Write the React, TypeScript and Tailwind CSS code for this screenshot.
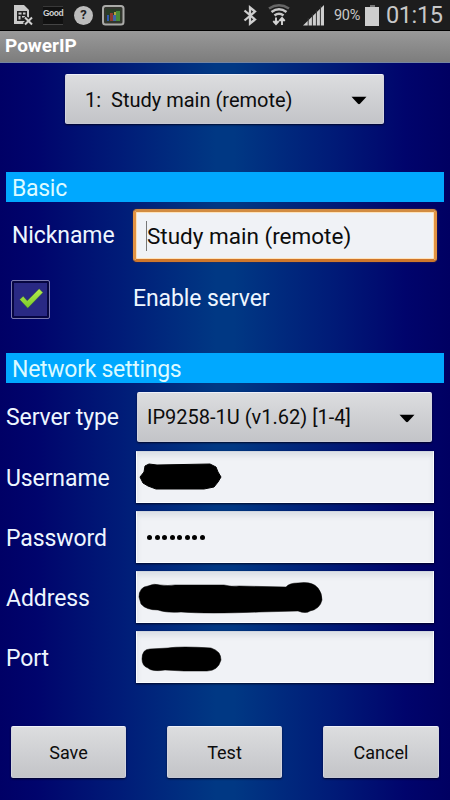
import type { ReactNode } from "react";

const face =
  "bg-linear-to-b from-[#dcdddf] to-[#c3c4c8] text-[#0c0c0c] border border-t-[#eef0fa] border-x-[#d3d5df] border-b-[#c6c8d4] rounded-[2px] shadow-[0_1px_2px_rgba(0,0,20,0.8)]";

function Caret({ className }: { className: string }) {
  return (
    <svg className={className} width="16" height="9" viewBox="0 0 16 9">
      <path d="M.5 .8H15.500L9 7.800Q8 8.500 7 7.800Z" fill="#000" />
    </svg>
  );
}

function Section({ children }: { children: ReactNode }) {
  return (
    <h2 className="mx-[6px] h-[30px] bg-[#00a8ff] pl-[6px] text-[23px] leading-[33px] font-normal tracking-[-0.28px] text-[#dcfaff]">
      {children}
    </h2>
  );
}

function Row({ label, children }: { label: string; children?: ReactNode }) {
  return (
    <div className="mb-[8px] flex h-[52px] items-center">
      <label className="w-[136px] pt-[3px] pl-[6px] text-[23px] leading-[30px] tracking-[-0.1px] text-[#eef6ff]">{label}</label>
      <div className="flex h-[52px] w-[298px] items-center border border-t-[#cfd5df] border-[#fafcff] bg-[#f0f2f6] shadow-[inset_0_4px_5px_rgba(120,130,150,0.16),0_1px_2px_rgba(0,0,20,0.8)]">
        {children}
      </div>
    </div>
  );
}

function StatusBar() {
  return (
    <header className="flex h-[31px] shrink-0 items-center border-b border-black bg-[#1d1d1d] text-[#c8c8c8]">
      <svg className="ml-[13px] shrink-0" width="21" height="22" viewBox="0 0 21 22">
        <path d="M1 1H11L16 6V20H1Z" fill="#c9c9c9" />
        <path d="M4 7h10v10H4z" fill="#222" />
        <path d="M5.5 8.5h3v2h-3zM10 8.5h2.5v2H10zM5.5 12h2v3.5h-2zM9 12h3.5v1.5H9z" fill="#c9c9c9" />
        <path d="M11.5 13 19 20.5M19 13l-7.500 7.500" stroke="#1d1d1d" strokeWidth="4.500" />
        <path d="M12 13.500 19 20.500M19 13.500l-7 7" stroke="#d0d0d0" strokeWidth="2" />
      </svg>
      <div className="ml-[9px] flex h-[19px] w-[20px] shrink-0 items-start justify-center border-t border-b border-t-[#393939] border-b-[#444] bg-[#111] pt-px font-['Liberation_Sans'] text-[8.500px] leading-[10px] font-bold tracking-[-0.500px] text-[#d0d0d0]">
        Good
      </div>
      <div className="ml-[11px] flex size-[19px] shrink-0 items-center justify-center rounded-full bg-[#bcbcbc] text-[13px] font-bold text-[#222]">
        ?
      </div>
      <svg className="ml-[9px] shrink-0" width="23" height="21" viewBox="0 0 23 21">
        <rect x="1" y="1" width="20.500" height="18.500" rx="2.500" fill="#34362f" stroke="#aaaaa8" strokeWidth="2" />
        <rect x="4" y="4" width="14.500" height="12.500" fill="#293d28" />
        <path d="M5 10h2v6H5z" fill="#3158ae" />
        <path d="M8 8h3v8H8z" fill="#8f3b30" />
        <path d="M11 10h3v6h-3z" fill="#4265a8" />
        <path d="M14 6h4v10h-4z" fill="#4a8a38" />
        <path d="M12 7h2v3h-2z" fill="#b2a240" />
      </svg>
      <svg className="ml-[118px] shrink-0" width="14" height="21" viewBox="0 0 14 21">
        <path d="M1.500 5.500 12 14.500 7 18.500V2.500l5 4L1.500 15.500" fill="none" stroke="#cecece" strokeWidth="2.300" />
      </svg>
      <svg className="ml-[10px] shrink-0" width="24" height="24" viewBox="0 0 24 24">
        <g fill="none" strokeWidth="2.600">
          <path d="M2 5.500Q12-1 22 5.500" stroke="#666" />
          <path d="M4.500 9Q12 3.500 19.500 9" stroke="#c8c8c8" />
          <path d="M7.500 12.500Q12 9 16.500 12.500" stroke="#c8c8c8" />
        </g>
        <path d="M9 14.500v7M6.300 18l2.700 3 2.700-3M15 22v-7M12.300 18l2.700-3 2.700 3" fill="none" stroke="#d4d4d4" strokeWidth="1.900" />
      </svg>
      <svg className="ml-[12px] shrink-0" width="22" height="22" viewBox="0 0 22 22">
        <path d="M0 21.500 21 1V21.500Z" fill="#cecece" />
        <path d="M5.200 14v8M9.400 10v12M13.400 6v16M17.400 2v20" stroke="#333" strokeWidth="1" />
      </svg>
      <span className="ml-[9px] w-[27px] shrink-0 pt-[2px] text-[14.500px] tracking-[-0.300px] whitespace-nowrap">90%</span>
      <svg className="ml-[4px] shrink-0" width="14" height="21" viewBox="0 0 14 21">
        <path d="M5 0h5v2H5z" fill="#777" />
        <path d="M0 2h14v19H0z" fill="#cecece" />
      </svg>
      <time className="ml-[7px] text-[23.500px] leading-[31px] tracking-[-0.400px]">01:15</time>
    </header>
  );
}

export default function App() {
  return (
    <div className="flex h-[800px] w-[450px] flex-col overflow-hidden bg-[linear-gradient(90deg,#000066_0%,#00046c_8%,#001c78_27%,#003884_48%,#003884_52%,#001c78_73%,#00046c_90%,#000062_100%)] font-[Roboto,sans-serif]">
      <StatusBar />
      <h1 className="h-[32px] shrink-0 border-b border-[#7585a0] bg-linear-to-b from-[#999] to-[#7d7d7d] pl-[5px] text-[19px] leading-[30px] font-bold text-white">
        PowerIP
      </h1>

      <main className="flex flex-col pt-[11px]">
        <button className={`ml-[65px] flex h-[50px] w-[319px] items-center pl-[19px] text-[20px] ${face}`}>
          <span className="w-[266px] pt-px text-left whitespace-pre">{"1:  Study main (remote)"}</span>
          <Caret className="mt-[2px]" />
        </button>

        <div className="mt-[48px]">
          <Section>Basic</Section>
        </div>
        <div className="mt-[7px] flex h-[53px] items-center">
          <label className="w-[133px] pt-[2px] pl-[12px] text-[23px] tracking-[-0.1px] text-[#eef6ff]">Nickname</label>
          <div className="flex h-[53px] w-[304px] items-center rounded-[4px] border-[3px] border-t-[#d28c42] border-x-[#e29343] border-b-[#cf772c] bg-[#f0f2f6] pl-[10px] text-[22.500px] text-[#0c0c0c] shadow-[inset_0_0_0_1px_#ffe2b8,0_0_2px_#472f3d]">
            <span className="h-[30px] w-px bg-[#777]" />
            <span className="pt-[2px]">Study main (remote)</span>
          </div>
        </div>
        <div className="mt-[18px] flex h-[38px] items-center">
          <div className="ml-[11px] flex size-[39px] items-center justify-center rounded-[2px] border-[1.500px] border-[#7878ae] bg-[#292984] shadow-[inset_0_0_0_2px_#060642]">
            <svg width="26" height="22" viewBox="0 0 24 20">
              <defs>
                <linearGradient id="check" x2="0" y2="1">
                  <stop stopColor="#b7ed4e" />
                  <stop offset="1" stopColor="#78c92a" />
                </linearGradient>
              </defs>
              <path d="M1.500 10.500 4.800 7.500 8.500 11.500 19.500 .5 23 4 9 18.500Z" fill="url(#check)" stroke="#294b43" strokeWidth=".4" />
            </svg>
          </div>
          <span className="ml-[83px] text-[23px] tracking-[-0.100px] text-[#eef6ff]">Enable server</span>
        </div>

        <div className="mt-[35px]">
          <Section>Network settings</Section>
        </div>
        <div className="mt-[9px] mb-[9px] flex h-[50px] items-center">
          <label className="w-[137px] pt-[2px] pl-[6px] text-[23px] tracking-[-0.100px] text-[#eef6ff]">Server type</label>
          <button className={`flex h-[50px] w-[295px] items-center pl-[9px] text-[20px] ${face}`}>
            <span className="w-[252px] text-left">IP9258-1U (v1.62) [1-4]</span>
            <Caret className="mt-[3px]" />
          </button>
        </div>
        <Row label="Username">
          <svg className="ml-[2px] blur-[0.5px]" width="84" height="30" viewBox="0 0 84 30">
            <path d="M1 15 5 10 6 4 10 2 18 3 71 2 77 5 79 10 82 15 79 20 75 25 65 27 17 27 9 24 4 21Z" strokeLinejoin="round" stroke="#000" />
          </svg>
        </Row>
        <Row label="Password">
          <span className="ml-[10px] flex gap-[2.500px]">
            {Array.from({ length: 8 }, (_, i) => (
              <i key={i} className="size-[5px] rounded-full bg-black" />
            ))}
          </span>
        </Row>
        <Row label="Address">
          <svg className="mt-[2px] ml-[1px] blur-[0.5px]" width="186" height="34" viewBox="0 0 186 34">
            <path d="M1 16Q1 6 10 5Q16 2 22 4Q30 5 37 4L86 4Q94 6 101 5L148 6Q151 2 160 2Q174 0 180 7Q184 12 184 19Q182 28 172 30Q168 33 160 30L121 31Q70 33 43 31Q28 32 20 29Q8 29 3 23Z" stroke="#000" strokeWidth=".5" />
          </svg>
        </Row>
        <Row label="Port">
          <svg className="mt-[4px] ml-[4px] blur-[0.5px]" width="82" height="28" viewBox="0 0 82 28">
            <path d="M1 14Q1 4 9 4L27 3Q40 1 70 3Q80 6 80 15Q77 26 66 26L43 26 24 25Q11 27 7 23Q1 21 1 14Z" stroke="#000" strokeWidth=".5" />
          </svg>
        </Row>
        <div className="mt-[35px] ml-[11px] flex gap-[41px] text-[18px]">
          <button className={`h-[52px] w-[115px] pt-px ${face}`}>Save</button>
          <button className={`h-[52px] w-[115px] pt-px ${face}`}>Test</button>
          <button className={`h-[52px] w-[116px] pt-px ${face}`}>Cancel</button>
        </div>
      </main>
    </div>
  );
}
